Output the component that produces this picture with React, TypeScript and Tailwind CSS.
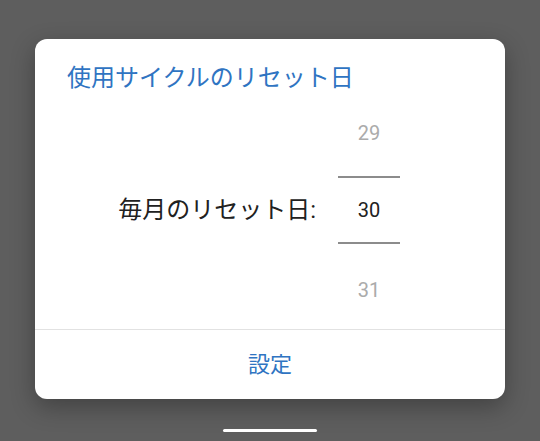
const font = {
  fontFamily: 'Roboto, "Noto Sans CJK JP", sans-serif',
};

function ResetDayDialog() {
  return (
    <div className="ml-[35px] mt-[39px] w-[470px] overflow-hidden rounded-[12px] bg-white shadow-[0_8px_24px_rgba(0,0,0,0.3)]">
      <h2 className="px-8 pt-[23px] text-[24px] leading-[32px] font-normal text-[#2f74c2]">
        使用サイクルのリセット日
      </h2>

      <div className="grid grid-cols-[auto_62px] justify-end gap-x-[22px] pr-[105px] pt-[19px] pb-[19px]">
        <div className="col-start-2 row-start-1 flex h-10 items-center justify-center text-[20px] text-[#ababab]">
          29
        </div>
        <div className="col-start-2 row-start-2 mt-[23px] h-[2px] bg-[#8c8c8c]" />
        <div className="col-start-1 row-start-3 flex items-center text-[24px] text-[#212121]">
          毎月のリセット日:
        </div>
        <div className="col-start-2 row-start-3 flex h-16 items-center justify-center text-[20px] text-[#212121]">
          30
        </div>
        <div className="col-start-2 row-start-4 h-[2px] bg-[#8c8c8c]" />
        <div className="col-start-2 row-start-5 mt-[26px] flex h-10 items-center justify-center text-[20px] text-[#ababab]">
          31
        </div>
      </div>

      <div className="h-px bg-[#e2e2e2]" />
      <button
        type="button"
        className="flex h-[69px] w-full items-center justify-center text-[22px] text-[#2f74c2]"
      >
        設定
      </button>
    </div>
  );
}

export default function App() {
  return (
    <div className="flex h-[441px] w-[540px] flex-col bg-[#5e5e5e]" style={font}>
      <ResetDayDialog />
      <div className="mx-auto mt-[30px] h-[3px] w-[94px] rounded-full bg-white" />
    </div>
  );
}
